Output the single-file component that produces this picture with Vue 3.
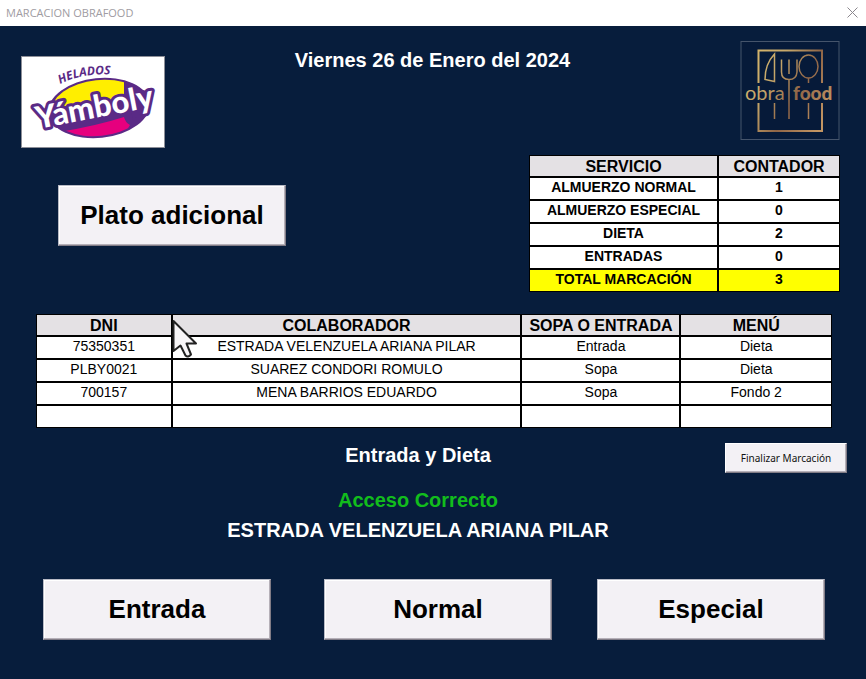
<script setup>
import { ref, computed } from 'vue'

const services = ref([
  { name: 'ALMUERZO NORMAL', count: 1 },
  { name: 'ALMUERZO ESPECIAL', count: 0 },
  { name: 'DIETA', count: 2 },
  { name: 'ENTRADAS', count: 0 },
])
const total = computed(() => services.value.reduce((sum, s) => sum + s.count, 0))

const entries = ref([
  { dni: '75350351', name: 'ESTRADA VELENZUELA ARIANA PILAR', starter: 'Entrada', menu: 'Dieta' },
  { dni: 'PLBY0021', name: 'SUAREZ CONDORI ROMULO', starter: 'Sopa', menu: 'Dieta' },
  { dni: '700157', name: 'MENA BARRIOS EDUARDO', starter: 'Sopa', menu: 'Fondo 2' },
  { dni: '', name: '', starter: '', menu: '' },
])
const actions = ['Entrada', 'Normal', 'Especial']
</script>

<template>
  <div class="window">
    <header class="titlebar">
      <span>MARCACION OBRAFOOD</span>
      <button class="close" type="button" aria-label="Cerrar">
        <svg width="11" height="11" viewBox="0 0 11 11"><path d="M.5 .5 10.5 10.5M10.5 .5 .5 10.5" fill="none" stroke="#8b878d" /></svg>
      </button>
    </header>

    <main>
      <section class="brand">
        <svg class="yamboly" width="144" height="92" viewBox="0 0 144 92" role="img" aria-label="Helados Yámboly">
          <defs>
            <path id="arc" d="M39 28 Q62 16 96 19" />
            <clipPath id="oval"><ellipse cx="78" cy="52" rx="48" ry="28" transform="rotate(-6 78 52)" /></clipPath>
          </defs>
          <rect x=".5" y=".5" width="143" height="91" fill="#fff" stroke="#8d8f98" />
          <ellipse cx="78" cy="52" rx="51" ry="30" transform="rotate(-6 78 52)" fill="#5a2a86" />
          <path d="M103 27L112 31L129 36L128 52L112 64Z" fill="#5a2a86" />
          <g clip-path="url(#oval)">
            <path d="M20 50V10H103V42L70 50Z" fill="#ffee00" />
            <path d="M38 76Q75 70 103 61Q104 66 109 69L96 90H38Z" fill="#e6007e" />
          </g>
          <text class="helados"><textPath href="#arc">HELADOS</textPath></text>
          <text class="yam" x="17" y="73" transform="rotate(-11 17 73)">Yámboly</text>
        </svg>
        <h1>Viernes 26 de Enero del 2024</h1>
        <svg class="obra" width="100" height="100" viewBox="0 0 100 100" role="img" aria-label="obra food">
          <defs>
            <linearGradient id="gold" gradientUnits="userSpaceOnUse" x1="6" y1="10" x2="94" y2="60">
              <stop offset="0" stop-color="#d9b96c" /><stop offset=".35" stop-color="#c5a76a" />
              <stop offset=".65" stop-color="#8f6547" /><stop offset="1" stop-color="#c29563" />
            </linearGradient>
          </defs>
          <rect x="1" y=".5" width="98" height="98" fill="#061a39" stroke="#45546b" />
          <g fill="none" stroke="url(#gold)">
            <path stroke-width="2" d="M18.500 42V9.500H82V42M18.500 62V90H82V62" />
            <path stroke-width="1.500" d="M34.500 13V40.500L25 38.500Q25 23 34.500 13ZM34.500 62V78" />
            <path stroke-width="1.500" d="M41.500 18.500V31Q41.500 38.500 49 38.500T57 31V18.500M49 18.500V33M49 38.500V78" />
            <path stroke-width="1.500" d="M68.500 37V42M68.500 62V78" />
            <ellipse stroke-width="1.500" cx="68.500" cy="25.500" rx="9.500" ry="11.500" />
          </g>
          <text class="gold" x="5" y="59">obra</text>
          <text class="gold heavy" x="53" y="59">food</text>
        </svg>
      </section>

      <section class="summary">
        <button class="big" type="button">Plato adicional</button>
        <table class="services">
          <thead><tr><th scope="col">SERVICIO</th><th scope="col" class="count">CONTADOR</th></tr></thead>
          <tbody>
            <tr v-for="s in services" :key="s.name"><td>{{ s.name }}</td><td>{{ s.count }}</td></tr>
            <tr class="total"><td>TOTAL MARCACIÓN</td><td>{{ total }}</td></tr>
          </tbody>
        </table>
      </section>

      <section class="log">
        <table>
          <colgroup><col class="c-dni" /><col class="c-name" /><col class="c-starter" /><col class="c-menu" /></colgroup>
          <thead>
            <tr><th scope="col">DNI</th><th scope="col">COLABORADOR</th><th scope="col">SOPA O ENTRADA</th><th scope="col">MENÚ</th></tr>
          </thead>
          <tbody>
            <tr v-for="(e, i) in entries" :key="i">
              <td>{{ e.dni }}</td><td>{{ e.name }}</td><td>{{ e.starter }}</td><td>{{ e.menu }}</td>
            </tr>
          </tbody>
        </table>
        <svg class="cursor" width="26" height="40" viewBox="0 0 26 40" aria-hidden="true">
          <path d="M1.500 2V32L8.500 26.500L13.500 36.500Q16 39 19 35.500L14.500 24.500H24Z" fill="#f7f5f7" stroke="#222" stroke-width="2" stroke-linejoin="round" />
        </svg>
      </section>

      <section class="status">
        <div class="messages" aria-live="polite">
          <p>Entrada y Dieta</p>
          <p class="ok">Acceso Correcto</p>
          <p>ESTRADA VELENZUELA ARIANA PILAR</p>
        </div>
        <button class="finish" type="button">Finalizar Marcación</button>
      </section>

      <nav class="actions" aria-label="Tipo de marcación">
        <button v-for="a in actions" :key="a" class="big" type="button">{{ a }}</button>
      </nav>
    </main>
  </div>
</template>

<style>
body { margin: 0; background: #071d3c; }
</style>

<style scoped>
.window { min-height: 100vh; background: #071d3c; font-family: "Liberation Sans", Arial, sans-serif; color: #000; }
.titlebar { display: flex; align-items: center; justify-content: space-between; height: 26px; padding: 0 8px 2px 6px; box-sizing: border-box; background: #fff; color: #a09ca2; font: 11px "Open Sans", "Noto Sans", sans-serif; }
.close { display: flex; padding: 0; border: 0; background: none; }
.brand { display: grid; grid-template-columns: 144px 1fr 140px; align-items: start; padding: 15px 26px 0 21px; }
.yamboly { display: block; margin-top: 15px; }
.obra { display: block; justify-self: end; }
h1 { margin: 7px 0 0; text-align: center; color: #fff; font-size: 20px; line-height: 24px; }
.helados { font: italic bold 12px "Open Sans", sans-serif; fill: #5a2a86; }
.yam { font: 900 31px Lato, sans-serif; fill: #fff; stroke: #5a2a86; stroke-width: 6px; stroke-linejoin: round; paint-order: stroke; }
.gold { font: 20px Lato, sans-serif; fill: url(#gold); }
.heavy { font-weight: 900; font-size: 19px; }
.summary { display: flex; justify-content: space-between; align-items: flex-start; padding: 7px 26px 0 58px; }
.summary .big { margin-top: 30px; }
.big { width: 228px; height: 61px; padding: 0; border: 1px solid; border-color: #b9bbc6 #817c86 #817c86 #b9bbc6; box-shadow: inset -1px -1px #b5b0b8, inset 1px 1px #fff; background: #f3f1f5; color: #000; font: bold 26px "Liberation Sans", Arial, sans-serif; }
table { border-collapse: collapse; table-layout: fixed; background: #fff; text-align: center; }
th, td { border: 2px solid #000; padding: 1px 0 3px; height: 17px; line-height: 17px; font-size: 14px; }
th { padding: 1px 0 0; height: 19px; line-height: 19px; font-size: 16px; border-top-width: 1px; background: #e4e1e4; white-space: nowrap; }
tr > :first-child { border-left-width: 1px; }
tr > :last-child { border-right-width: 1px; }
tbody tr:last-child td { border-bottom-width: 1px; }
.services { width: 311px; font-weight: bold; }
.count { width: 120px; }
.total { background: #ff0; }
.log { position: relative; margin: 22px 34px 0 36px; }
.log table { width: 100%; }
.c-dni { width: 17%; }
.c-name { width: 44%; }
.c-starter { width: 20%; }
.c-menu { width: 19%; }
.cursor { position: absolute; left: 136px; top: 5px; }
.status { display: grid; align-items: start; padding: 15px 19px 0; }
.messages, .finish { grid-area: 1 / 1; }
.messages { padding-right: 30px; text-align: center; color: #fff; font-size: 20px; font-weight: bold; line-height: 24px; }
.messages p { margin: 0 0 6px; }
.messages .ok { margin-top: 21px; color: #12bd1c; }
.finish { justify-self: end; width: 122px; height: 30px; padding: 0; border: 1px solid; border-color: #fff #817c86 #817c86 #fff; box-shadow: inset -1px -1px #b5b0b8; background: #f3f1f5; color: #111; font: 10px "Noto Sans", sans-serif; }
.actions { display: grid; grid-template-columns: 281fr 273fr 228fr; padding: 31px 41px 39px 43px; }
</style>
